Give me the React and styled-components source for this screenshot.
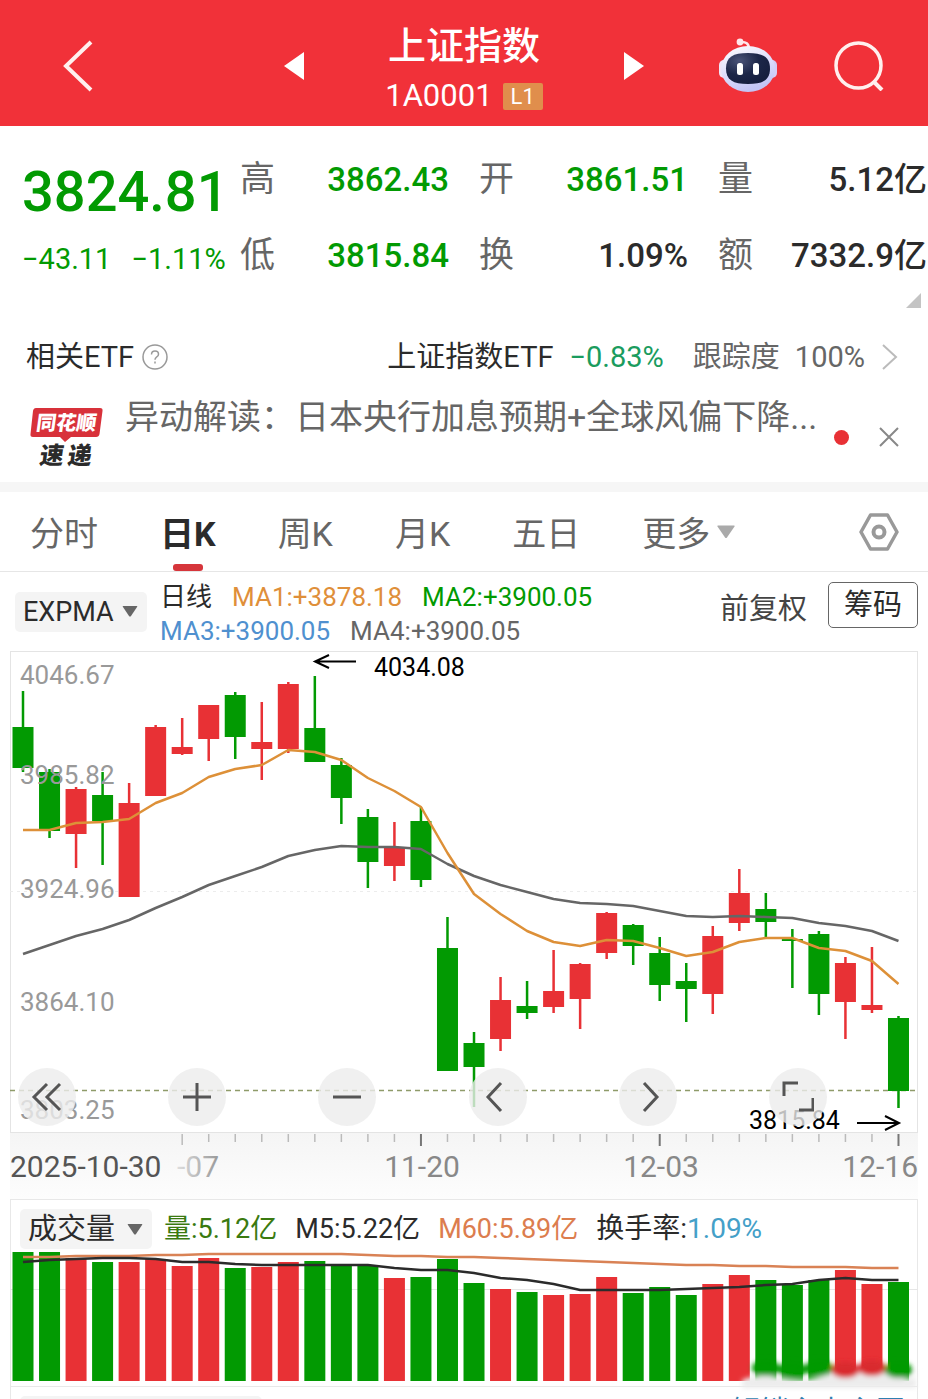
import React, { useState } from 'react';
import styled, { createGlobalStyle } from 'styled-components';

const RED = '#e83135';
const GREEN = '#029a02';

const GlobalStyle = createGlobalStyle`
  * {
    box-sizing: border-box;
  }
  body {
    margin: 0;
    background: #fff;
    color: #2b2b2b;
    font-family: Roboto, 'Noto Sans CJK SC', sans-serif;
  }
  button, select {
    font-family: inherit;
    color: inherit;
    border: none;
    background: none;
    padding: 0;
    margin: 0;
    cursor: pointer;
  }
  svg {
    display: block;
  }
`;

const Page = styled.main`
  height: 100vh;
  overflow: hidden;
`;

/* ---------- header ---------- */

const Header = styled.header`
  display: grid;
  grid-template-columns: 1fr 320px 1fr;
  align-items: center;
  height: 126px;
  background: #f13139;
  color: #fff;
`;

const HeaderSide = styled.div`
  display: flex;
  align-items: center;
  justify-content: ${(props) => (props.$end ? 'flex-end' : 'space-between')};
  gap: 56px;
  padding: ${(props) => (props.$end ? '6px 44px 0 0' : '6px 0 0 62px')};

  & > .next {
    margin-right: auto;
  }
`;

const HeaderTitle = styled.div`
  padding-top: 16px;
  text-align: center;
`;

const IndexName = styled.h1`
  margin: 0;
  font-size: 38px;
  line-height: 50px;
  font-weight: 500;
`;

const IndexCode = styled.div`
  display: flex;
  align-items: center;
  justify-content: center;
  gap: 10px;
  font-size: 31px;
  line-height: 50px;
`;

const Level = styled.span`
  padding: 0 8px;
  border-radius: 2px;
  background: #e08e4c;
  font-size: 22px;
  line-height: 27px;
`;

/* ---------- quote ---------- */

const Quote = styled.section`
  display: flex;
  height: 204px;
  padding: 16px 1px 0 22px;
  position: relative;
`;

const PriceBox = styled.div`
  width: 218px;
  color: ${GREEN};
`;

const Price = styled.div`
  font-size: 56px;
  line-height: 100px;
  font-weight: 500;
`;

const Change = styled.div`
  display: flex;
  gap: 20px;
  font-size: 29px;
  line-height: 34px;
`;

const Stats = styled.dl`
  flex: 1;
  display: grid;
  grid-template-columns: repeat(3, 1fr);
  grid-auto-rows: 76px;
  align-items: center;
  column-gap: 30px;
  margin: 0;
`;

const Stat = styled.div`
  display: flex;
  align-items: baseline;
  justify-content: space-between;
  font-size: 33px;
  line-height: 40px;

  dt {
    font-size: 35px;
    color: #666;
  }
  dd {
    margin: 0;
    font-weight: 500;
    color: ${(props) => props.$color || '#2b2b2b'};
  }
`;

const ExpandButton = styled.button`
  position: absolute;
  right: 7px;
  bottom: 22px;
`;

/* ---------- ETF and news ---------- */

const EtfRow = styled.section`
  display: flex;
  align-items: center;
  height: 54px;
  padding: 0 30px 0 26px;
  font-size: 29px;
  line-height: 40px;
`;

const EtfName = styled.a`
  margin-left: auto;
  margin-right: 16px;
  color: inherit;
  text-decoration: none;
`;

const EtfChange = styled.span`
  color: #1a9c5e;
  margin-right: 29px;
`;

const EtfTrack = styled.span`
  display: flex;
  gap: 15px;
  margin-right: 16px;
  color: #666;
`;

const HelpButton = styled.button`
  margin-left: 8px;
`;

const NewsRow = styled.section`
  display: flex;
  align-items: center;
  height: 98px;
  padding: 8px 29px 0 28px;
`;

const NewsTitle = styled.a`
  flex: 1;
  margin-left: 21px;
  padding-bottom: 40px;
  color: #666;
  font-size: 34px;
  line-height: 48px;
  text-decoration: none;
  white-space: nowrap;
`;

const Dot = styled.span`
  width: 15px;
  height: 15px;
  margin: 0 30px 0 8px;
  border-radius: 50%;
  background: ${RED};
`;

const Band = styled.div`
  height: 10px;
  background: #f6f6f6;
`;

/* ---------- tabs ---------- */

const Tabs = styled.nav`
  display: flex;
  align-items: center;
  gap: 62px;
  height: 80px;
  padding: 0 29px 0 30px;
  border-bottom: 1px solid #e6e6e6;
`;

const Tab = styled.button`
  display: flex;
  align-items: center;
  gap: 7px;
  position: relative;
  height: 79px;
  font-size: 34px;
  font-weight: ${(props) => (props.$active ? 700 : 400)};
  color: ${(props) => (props.$active ? '#2b2b2b' : '#666')};

  &::after {
    content: '';
    display: ${(props) => (props.$active ? 'block' : 'none')};
    position: absolute;
    left: 50%;
    bottom: 0;
    width: 30px;
    height: 7px;
    margin-left: -15px;
    border-radius: 3px;
    background: #d6353b;
  }
`;

const SettingsButton = styled.button`
  margin-left: auto;
`;

/* ---------- indicator bar ---------- */

const IndicatorBar = styled.div`
  display: flex;
  align-items: center;
  height: 79px;
  padding: 0 10px 0 15px;
`;

const SelectBox = styled.label`
  display: flex;
  align-items: center;
  position: relative;
  flex: none;
  width: 132px;
  height: 40px;
  border-radius: 5px;
  background: #f4f4f4;

  select {
    appearance: none;
    width: 100%;
    height: 100%;
    padding-left: 8px;
    font-size: ${(props) => props.$size};
    outline: none;
  }
  svg {
    position: absolute;
    right: 9px;
    pointer-events: none;
  }
`;

const Legend = styled.div`
  flex: 1;
  display: flex;
  flex-wrap: wrap;
  column-gap: 20px;
  margin: 4px 100px 0 13px;
  font-size: 26px;
  line-height: 34px;
  white-space: nowrap;
`;

const Series = styled.span`
  color: ${(props) => props.$color};
`;

const AdjustButton = styled.button`
  margin: 0 21px 12px 0;
  font-size: 29px;
  color: #444;
`;

const ChipsButton = styled.button`
  width: 90px;
  height: 46px;
  margin-bottom: 14px;
  border: 1px solid #666;
  border-radius: 5px;
  font-size: 29px;
  line-height: 44px;
`;

/* ---------- charts ---------- */

const ChartBox = styled.section`
  position: relative;
  margin: 0 10px;

  & > svg {
    width: 100%;
    height: auto;
    overflow: visible;
  }
`;

const AxisBox = styled(ChartBox)`
  background: linear-gradient(#f5f5f5, #fdfdfd);
`;

const Controls = styled.div`
  position: absolute;
  left: 8px;
  right: 91px;
  bottom: 7px;
  display: flex;
  justify-content: space-between;
`;

const RoundButton = styled.button`
  display: flex;
  align-items: center;
  justify-content: center;
  width: 58px;
  height: 58px;
  border-radius: 50%;
  background: rgba(236, 236, 236, 0.8);
`;

const VolumePanel = styled.section`
  margin: 0 10px;
  border: 1px solid #e8e8e8;
`;

const VolumeHead = styled.div`
  display: flex;
  align-items: center;
  gap: 18px;
  height: 52px;
  padding: 6px 9px 0;
  font-size: 27px;
  line-height: 40px;
  white-space: nowrap;

  ${SelectBox} {
    margin-right: -6px;
  }
`;

const Turnover = styled.span`
  font-size: 28px;
`;

const VolumeChart = styled.svg`
  width: 100%;
  height: auto;
  overflow: visible;
`;

const NextPanel = styled.section`
  display: flex;
  justify-content: space-between;
  margin: 0 10px;
  padding: 9px 12px 0 9px;
  border: solid #e8e8e8;
  border-width: 0 1px;
`;

const NextSelect = styled.div`
  width: 242px;
  height: 40px;
  border-radius: 5px;
  background: #f4f4f4;
`;

const UnlockLink = styled.a`
  color: #2f7fb0;
  font-size: 29px;
  line-height: 32px;
  text-decoration: none;
`;

/* ---------- data ---------- */

// [body top, body bottom, high, low, rising, volume top]
const candles = [
  [727, 768, 691, 772, 0, 1252],
  [772, 831, 769, 838, 0, 1252],
  [789, 834, 787, 868, 1, 1258],
  [795, 821, 772, 865, 0, 1262],
  [803, 897, 783, 897, 1, 1262],
  [727, 796, 725, 796, 1, 1259],
  [747, 754, 718, 755, 1, 1266],
  [705, 739, 705, 761, 1, 1258],
  [695, 737, 692, 759, 0, 1268],
  [742, 749, 702, 780, 1, 1267],
  [684, 749, 682, 753, 1, 1262],
  [728, 762, 676, 762, 0, 1261],
  [765, 798, 758, 824, 0, 1265],
  [817, 862, 809, 888, 0, 1266],
  [848, 866, 822, 881, 1, 1278],
  [821, 880, 807, 887, 0, 1277],
  [948, 1071, 917, 1071, 0, 1259],
  [1043, 1067, 1032, 1107, 0, 1283],
  [1000, 1039, 977, 1051, 1, 1289],
  [1006, 1013, 981, 1019, 0, 1292],
  [991, 1007, 950, 1013, 1, 1295],
  [964, 999, 963, 1029, 1, 1294],
  [913, 953, 912, 959, 1, 1277],
  [925, 946, 924, 965, 0, 1293],
  [953, 985, 937, 1001, 0, 1287],
  [981, 989, 963, 1022, 0, 1295],
  [936, 994, 926, 1014, 1, 1284],
  [893, 923, 869, 931, 1, 1275],
  [909, 922, 893, 937, 0, 1280],
  [939, 941, 929, 988, 0, 1285],
  [934, 994, 931, 1015, 0, 1280],
  [963, 1002, 957, 1039, 1, 1270],
  [1005, 1010, 947, 1013, 1, 1284],
  [1018, 1091, 1016, 1108, 0, 1282],
];

const fastLine = [
  830, 830, 823, 822, 819, 803, 793, 777, 769, 765, 750, 752, 760, 778, 791, 807, 853, 894, 914, 931,
  942, 946, 940, 941, 948, 956, 952, 942, 938, 938, 948, 951, 961, 984,
];
const slowLine = [
  954, 945, 936, 929, 920, 908, 897, 885, 876, 867, 856, 850, 846, 847, 847, 849, 864, 876, 885, 892,
  899, 903, 904, 906, 911, 916, 917, 916, 917, 918, 923, 926, 931, 941,
];
const volumeM5 = [
  1262, 1260, 1259, 1258, 1258, 1259, 1262, 1262, 1264, 1265, 1265, 1265, 1265, 1265, 1268, 1270, 1270,
  1273, 1278, 1280, 1284, 1290, 1290, 1290, 1290, 1289, 1288, 1287, 1285, 1284, 1280, 1278, 1280, 1280,
];
const volumeM60 = [
  1257, 1257, 1256, 1256, 1256, 1255, 1255, 1254, 1254, 1254, 1254, 1254, 1254, 1255, 1256, 1256, 1257,
  1257, 1258, 1259, 1260, 1261, 1262, 1263, 1264, 1265, 1265, 1266, 1266, 1267, 1267, 1267, 1268, 1268,
];

const priceLabels = [
  [32, '4046.67'],
  [132, '3985.82'],
  [246, '3924.96'],
  [359, '3864.10'],
  [467, '3803.25'],
];

const TOP = 651;
const VOLUME_TOP = 1252;
const xAt = (i) => 13 + i * 26.53;
const linePoints = (line, top) => line.map((y, i) => `${xAt(i)},${y - top}`).join(' ');

const stats = [
  ['高', '3862.43', GREEN],
  ['开', '3861.51', GREEN],
  ['量', '5.12亿'],
  ['低', '3815.84', GREEN],
  ['换', '1.09%'],
  ['额', '7332.9亿'],
];

const tabs = ['分时', '日K', '周K', '月K', '五日', '更多'];

/* ---------- icons ---------- */

const Triangle = ({ w = 18, h = 13, color = '#666' }) => (
  <svg width={w} height={h} viewBox="0 0 18 13">
    <path d="M1 0h16q1 0 .5 1L10 12q-1 1-2 0L.5 1Q0 0 1 0z" fill={color} />
  </svg>
);

const Robot = () => (
  <svg width="60" height="56" viewBox="0 0 60 56">
    <defs>
      <linearGradient id="shell" x1="0" y1="0" x2="0.4" y2="1">
        <stop offset="0" stopColor="#fff" />
        <stop offset="0.6" stopColor="#dcdcfb" />
        <stop offset="1" stopColor="#c3c4f5" />
      </linearGradient>
      <radialGradient id="visor" cx="0.3" cy="0.25" r="0.9">
        <stop offset="0" stopColor="#4a5378" />
        <stop offset="0.5" stopColor="#1c2648" />
        <stop offset="1" stopColor="#141c3c" />
      </radialGradient>
    </defs>
    <path d="M22 4q9-1 9 7" fill="none" stroke="#ffe6ea" strokeWidth="2.5" />
    <circle cx="22" cy="4" r="3.4" fill="#ffe6ea" />
    <rect x="1" y="22" width="10" height="18" rx="5" fill="#f0e4f5" />
    <rect x="49" y="22" width="10" height="18" rx="5" fill="#d5cdf5" />
    <ellipse cx="30" cy="31" rx="27" ry="23" fill="url(#shell)" />
    <path d="M30 15c15 0 22 4 22 15.500S45 46 30 46 8 42 8 30.500 15 15 30 15z" fill="url(#visor)" />
    <rect x="19" y="25" width="6" height="12" rx="2.5" fill="#fff" />
    <rect x="35" y="25" width="6" height="12" rx="2.5" fill="#fff" />
  </svg>
);

const Logo = () => (
  <svg width="76" height="76" viewBox="0 -6 76 76" role="img" aria-label="同花顺速递">
    <path d="M8 3h64q3 0 2.500 3l-3 23q-.5 3-3.500 3H43l-6 5-5-5H5q-3 0-2.500-3L5 6q.5-3 3-3z" fill="#d8313a" />
    <g transform="skewX(-8)" fontFamily="Noto Sans CJK SC" fontWeight="900" textAnchor="middle">
      <text x="41" y="25" fontSize="20" fill="#fff">同花顺</text>
      <text x="31" y="59" fontSize="24" fill="#2b2b2b">速</text>
      <text x="59" y="59" fontSize="24" fill="#2b2b2b">递</text>
    </g>
  </svg>
);

const controls = [
  ['最早', 'M14 1 1 14l13 13M27 1 14 14l13 13'],
  ['放大', 'M14 0v28M0 14h28'],
  ['缩小', 'M0 14h28'],
  ['左移', 'M17 0 4 14l13 14'],
  ['右移', 'M10 0l13 14-13 14'],
  ['全屏', 'M0 13V0h14M29 15v12H15'],
];

/* ---------- sections ---------- */

const KLineChart = () => (
  <ChartBox>
    <svg viewBox="0 0 908 482">
      <rect x="0.500" y="0.500" width="907" height="481" fill="none" stroke="#e4e4e4" />
      <path d="M0 240.500H908" stroke="#ececec" strokeDasharray="3 4" />
      <path d="M0 439.500H908" stroke="#8f9b6a" strokeWidth="1.500" strokeDasharray="5 4" />
      {candles.map(([top, bottom, high, low, rising], i) => (
        <g key={i} fill={rising ? RED : GREEN}>
          <rect x={xAt(i) - 1.25} y={high - TOP} width="2.500" height={low - high} />
          <rect x={xAt(i) - 10.500} y={top - TOP} width="21" height={bottom - top} />
        </g>
      ))}
      <g fontSize="26" fill="#999">
        {priceLabels.map(([y, text]) => (
          <text key={text} x="10" y={y + 1}>{text}</text>
        ))}
      </g>
      <polyline points={linePoints(slowLine, TOP)} fill="none" stroke="#666" strokeWidth="2.500" strokeLinejoin="round" />
      <polyline points={linePoints(fastLine, TOP)} fill="none" stroke="#dd9038" strokeWidth="2.500" strokeLinejoin="round" />
      <g fill="none" stroke="#000" strokeWidth="2">
        <path d="M346 10.500H306M319 4l-14 6.500 14 6.500" />
        <path d="M847 472H888M875 465l14 7-14 7" />
      </g>
      <text x="364" y="25" fontSize="25">4034.08</text>
      <text x="739" y="478" fontSize="25">3815.84</text>
    </svg>
    <Controls>
      {controls.map(([label, d]) => (
        <RoundButton key={label} aria-label={label}>
          <svg width="32" height="32" viewBox="-2 -2 32 32">
            <path d={d} fill="none" stroke="#555" strokeWidth="3" />
          </svg>
        </RoundButton>
      ))}
    </Controls>
  </ChartBox>
);

const TimeAxis = () => (
  <AxisBox>
    <svg viewBox="0 0 908 66">
      <defs>
        <linearGradient id="fade">
          <stop offset="0" stopColor="#ddd" />
          <stop offset="1" stopColor="#999" />
        </linearGradient>
      </defs>
      {candles.map((_, i) => {
        if (i < 6) return null;
        const major = i === 15 || i === 24 || i === 33;
        return (
          <path
            key={i}
            d={`M${xAt(i)} 1v${major ? 12 : i === 6 ? 11 : 8}`}
            stroke={major ? '#777' : '#bbb'}
            strokeWidth={major ? 2 : 1.5}
          />
        );
      })}
      <g fontSize="30" fill="#888">
        <text x="0" y="44" fill="#555">2025-10-30</text>
        <text x="167" y="44" fill="url(#fade)">-07</text>
        <text x="412" y="44" textAnchor="middle">11-20</text>
        <text x="651" y="44" textAnchor="middle">12-03</text>
        <text x="908" y="44" textAnchor="end">12-16</text>
      </g>
    </svg>
  </AxisBox>
);

const Volume = () => (
  <VolumePanel>
    <VolumeHead>
      <SelectBox $size="29px">
        <select aria-label="副图指标" defaultValue="成交量">
          <option>成交量</option>
          <option>MACD</option>
          <option>KDJ</option>
        </select>
        <Triangle w={16} h={11} />
      </SelectBox>
      <Series $color="#3a7a10">量:5.12亿</Series>
      <Series $color="#2b2b2b">M5:5.22亿</Series>
      <Series $color="#dc7d4e">M60:5.89亿</Series>
      <Turnover>换手率:<Series $color="#44a0c8">1.09%</Series></Turnover>
    </VolumeHead>
    <VolumeChart viewBox="1 0 906 134">
      <defs>
        <filter id="smear" x="-10%" y="-50%" width="120%" height="200%">
          <feGaussianBlur stdDeviation="2.500" />
        </filter>
      </defs>
      <path d="M0 37.500H908" stroke="#e6e6e6" />
      {candles.map(([, , , , rising, top], i) => (
        <rect
          key={i}
          x={xAt(i) - 10.500}
          y={top - VOLUME_TOP}
          width="21"
          height={129 - (top - VOLUME_TOP)}
          fill={rising ? RED : GREEN}
        />
      ))}
      <polyline points={linePoints(volumeM60, VOLUME_TOP)} fill="none" stroke="#d98255" strokeWidth="2.500" />
      <polyline points={linePoints(volumeM5, VOLUME_TOP)} fill="none" stroke="#2b2b2b" strokeWidth="2.500" />
      <g filter="url(#smear)">
        <path d="M732 128q20-8 40-2t50-5 60 1 24-6v20H732z" fill="#ececec" />
        {candles.slice(28).map(([, , , , rising], i) => (
          <ellipse key={i} cx={xAt(i + 28)} cy={116 + (i % 2) * 2} rx="14" ry="8" fill={rising ? '#d9292f' : GREEN} />
        ))}
      </g>
    </VolumeChart>
  </VolumePanel>
);

const App = () => {
  const [active, setActive] = useState('日K');

  return (
    <Page>
      <GlobalStyle />
      <Header>
        <HeaderSide>
          <button aria-label="返回">
            <svg width="32" height="52" viewBox="0 0 32 52">
              <path d="M29 2 4 26l25 24" fill="none" stroke="#fff0ee" strokeWidth="4" />
            </svg>
          </button>
          <button aria-label="上一个">
            <svg width="20" height="28" viewBox="0 0 20 28"><path d="M20 0v28L0 14z" fill="#fff" /></svg>
          </button>
        </HeaderSide>
        <HeaderTitle>
          <IndexName>上证指数</IndexName>
          <IndexCode>1A0001 <Level>L1</Level></IndexCode>
        </HeaderTitle>
        <HeaderSide $end>
          <button className="next" aria-label="下一个">
            <svg width="20" height="28" viewBox="0 0 20 28"><path d="M0 0v28l20-14z" fill="#fff" /></svg>
          </button>
          <button aria-label="智能助手"><Robot /></button>
          <button aria-label="搜索">
            <svg width="50" height="50" viewBox="0 0 50 50" fill="none" stroke="#fff0ee" strokeWidth="3.500">
              <circle cx="24.500" cy="24.500" r="22.500" />
              <path d="M39 40l9 9" strokeWidth="4" />
            </svg>
          </button>
        </HeaderSide>
      </Header>

      <Quote>
        <PriceBox>
          <Price>3824.81</Price>
          <Change><span>−43.11</span><span>−1.11%</span></Change>
        </PriceBox>
        <Stats>
          {stats.map(([label, value, color]) => (
            <Stat key={label} $color={color}>
              <dt>{label}</dt>
              <dd>{value}</dd>
            </Stat>
          ))}
        </Stats>
        <ExpandButton aria-label="展开">
          <svg width="15" height="15" viewBox="0 0 15 15"><path d="M15 0v15H0z" fill="#c4c4c4" /></svg>
        </ExpandButton>
      </Quote>

      <EtfRow>
        相关ETF
        <HelpButton aria-label="帮助">
          <svg width="26" height="26" viewBox="0 0 26 26" fill="none" stroke="#999" strokeWidth="1.500">
            <circle cx="13" cy="13" r="12" />
            <path d="M9.500 10.500q0-3.500 3.500-3.500t3.500 3.200q0 1.800-2 3-1.500 1-1.500 2.600M13 17.500v2" />
          </svg>
        </HelpButton>
        <EtfName href="#etf">上证指数ETF</EtfName>
        <EtfChange>−0.83%</EtfChange>
        <EtfTrack><span>跟踪度</span><span>100%</span></EtfTrack>
        <svg width="17" height="28" viewBox="0 0 17 28">
          <path d="M2 2l13 12L2 26" fill="none" stroke="#bbb" strokeWidth="2" />
        </svg>
      </EtfRow>

      <NewsRow>
        <Logo />
        <NewsTitle href="#news">异动解读：日本央行加息预期+全球风偏下降...</NewsTitle>
        <Dot />
        <button aria-label="关闭">
          <svg width="20" height="20" viewBox="0 0 20 20">
            <path d="M1 1l18 18M19 1 1 19" stroke="#888" strokeWidth="2" />
          </svg>
        </button>
      </NewsRow>

      <Band />

      <Tabs>
        {tabs.map((name) => (
          <Tab key={name} $active={name === active} onClick={() => setActive(name)}>
            {name}
            {name === '更多' && <Triangle w={18} h={16} color="#aaa" />}
          </Tab>
        ))}
        <SettingsButton aria-label="设置">
          <svg width="40" height="38" viewBox="0 0 40 38" fill="none" stroke="#999" strokeLinejoin="round">
            <path d="M11.500 2h17L38 19l-9.500 17h-17L2 19z" strokeWidth="3.500" />
            <circle cx="20" cy="19" r="5.500" strokeWidth="4" />
          </svg>
        </SettingsButton>
      </Tabs>

      <IndicatorBar>
        <SelectBox $size="27px">
          <select aria-label="主图指标" defaultValue="EXPMA">
            <option>EXPMA</option>
            <option>MA</option>
            <option>BOLL</option>
          </select>
          <Triangle w={16} h={11} />
        </SelectBox>
        <Legend>
          <Series $color="#2b2b2b">日线</Series>
          <Series $color="#df8f3a">MA1:+3878.18</Series>
          <Series $color={GREEN}>MA2:+3900.05</Series>
          <Series $color="#4f90cf">MA3:+3900.05</Series>
          <Series $color="#666">MA4:+3900.05</Series>
        </Legend>
        <AdjustButton>前复权</AdjustButton>
        <ChipsButton>筹码</ChipsButton>
      </IndicatorBar>

      <KLineChart />
      <TimeAxis />
      <Volume />

      <NextPanel>
        <NextSelect />
        <UnlockLink href="#unlock">解锁主力主图</UnlockLink>
      </NextPanel>
    </Page>
  );
};

export default App;
